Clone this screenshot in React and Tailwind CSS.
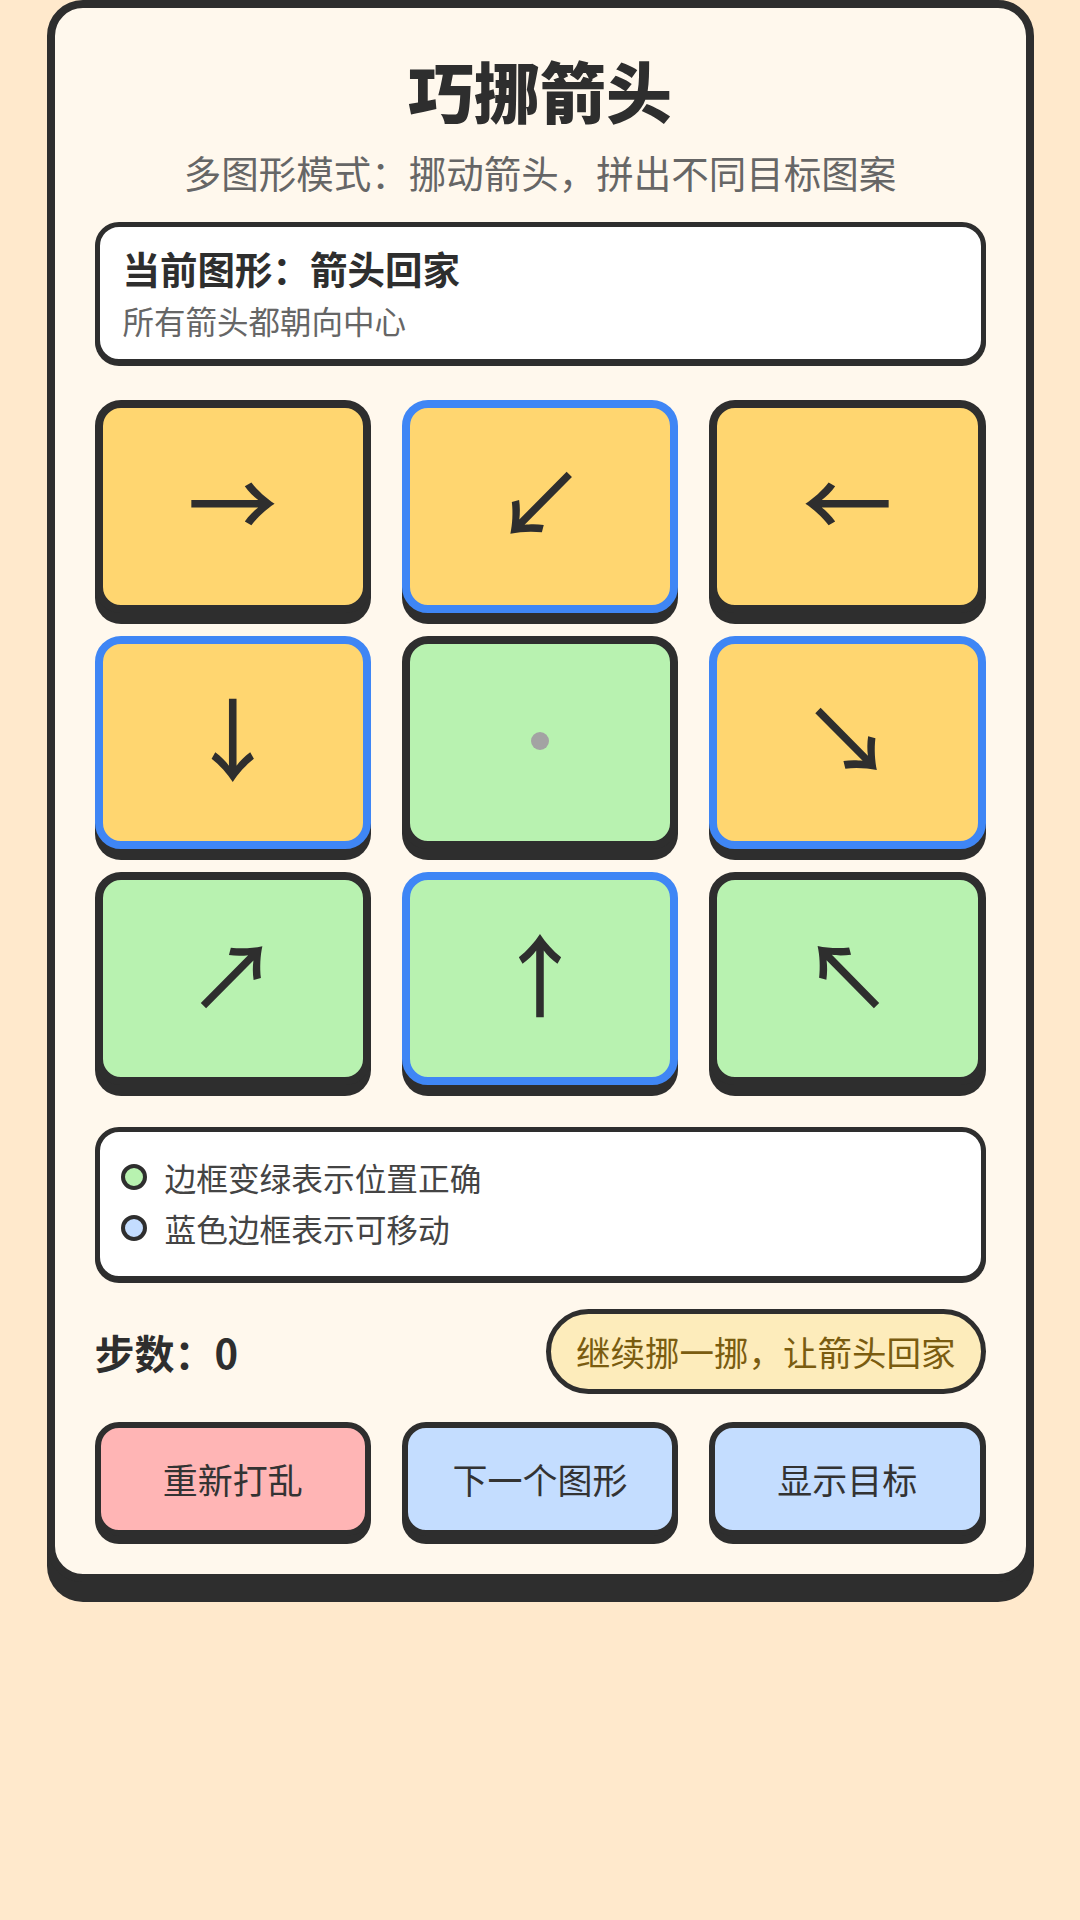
import React from "react";

const tiles = [
  { ch: "→", fill: "bg-[#ffd670]", move: false },
  { ch: "↙", fill: "bg-[#ffd670]", move: true },
  { ch: "←", fill: "bg-[#ffd670]", move: false },
  { ch: "↓", fill: "bg-[#ffd670]", move: true },
  { ch: null, fill: "bg-[#b8f2b0]", move: false },
  { ch: "↘", fill: "bg-[#ffd670]", move: true },
  { ch: "↗", fill: "bg-[#b8f2b0]", move: false },
  { ch: "↑", fill: "bg-[#b8f2b0]", move: true },
  { ch: "↖", fill: "bg-[#b8f2b0]", move: false },
];

function Tile({ ch, fill, move }) {
  return (
    <div
      className={`flex h-[213px] items-center justify-center rounded-[26px] border-[8px] shadow-[0_11px_0_#2e2e2e] ${fill} ${
        move ? "border-[#3f86f5]" : "border-[#2e2e2e]"
      }`}
    >
      {ch ? (
        <span className="mb-[16px] text-[90px] font-medium leading-none text-[#2e2e2e]">{ch}</span>
      ) : (
        <span className="mb-[4px] h-[18px] w-[18px] rounded-full bg-[#a3a3a3]" />
      )}
    </div>
  );
}

function ActionButton({ label, fill }) {
  return (
    <button
      className={`flex h-[114px] items-center justify-center rounded-[24px] border-[6px] border-[#2e2e2e] text-[35px] text-[#333] shadow-[0_8px_0_#2e2e2e] ${fill}`}
    >
      {label}
    </button>
  );
}

export default function App() {
  return (
    <div
      className="min-h-[1920px] bg-[#ffe9cc]"
      style={{ fontFamily: '"Noto Sans CJK SC", "Noto Sans", sans-serif' }}
    >
      <div className="mx-auto w-[987px] rounded-[36px] border-[8px] border-[#2e2e2e] bg-[#fff8ed] px-[40px] pb-[38px] pt-[43px] shadow-[0_20px_0_#2e2e2e]">
        <h1 className="text-center text-[66px] font-black leading-[77px] text-[#2e2e2e]">巧挪箭头</h1>
        <p className="mt-[20px] text-center text-[37.5px] leading-[48px] text-[#666]">
          多图形模式：挪动箭头，拼出不同目标图案
        </p>

        <div className="mt-[26px] rounded-[24px] border-[5px] border-[#2e2e2e] bg-white px-[23px] pb-[19px] pt-[19px] shadow-[0_2px_0_#2e2e2e]">
          <div className="text-[37.5px] font-bold leading-[44px] text-[#2e2e2e]">当前图形：箭头回家</div>
          <div className="mt-[10px] text-[31.5px] leading-[40px] text-[#666]">所有箭头都朝向中心</div>
        </div>

        <div className="mt-[36px] grid grid-cols-3 gap-x-[31px] gap-y-[23px]">
          {tiles.map((t, i) => (
            <Tile key={i} {...t} />
          ))}
        </div>

        <div className="mt-[42px] flex flex-col gap-[7px] rounded-[24px] border-[5px] border-[#2e2e2e] bg-white px-[21px] pb-[26px] pt-[23px] shadow-[0_2px_0_#2e2e2e]">
          <div className="flex items-center gap-[18px] text-[31.7px] leading-[44px] text-[#444]">
            <span className="h-[26px] w-[26px] rounded-full border-[4px] border-[#2e2e2e] bg-[#b8f2b0]" />
            边框变绿表示位置正确
          </div>
          <div className="flex items-center gap-[18px] text-[31.7px] leading-[44px] text-[#444]">
            <span className="h-[26px] w-[26px] rounded-full border-[4px] border-[#2e2e2e] bg-[#c4ddff]" />
            蓝色边框表示可移动
          </div>
        </div>

        <div className="mt-[28px] flex items-center justify-between">
          <div className="text-[40px] font-bold text-[#2e2e2e]">步数：0</div>
          <div className="flex h-[85px] items-center rounded-full border-[5px] border-[#2e2e2e] bg-[#fdecbb] px-[25px] text-[34.5px] text-[#7a5c10]">
            继续挪一挪，让箭头回家
          </div>
        </div>

        <div className="mt-[28px] grid grid-cols-3 gap-x-[31px]">
          <ActionButton label="重新打乱" fill="bg-[#ffb5b5]" />
          <ActionButton label="下一个图形" fill="bg-[#c4ddff]" />
          <ActionButton label="显示目标" fill="bg-[#c4ddff]" />
        </div>
      </div>
    </div>
  );
}
